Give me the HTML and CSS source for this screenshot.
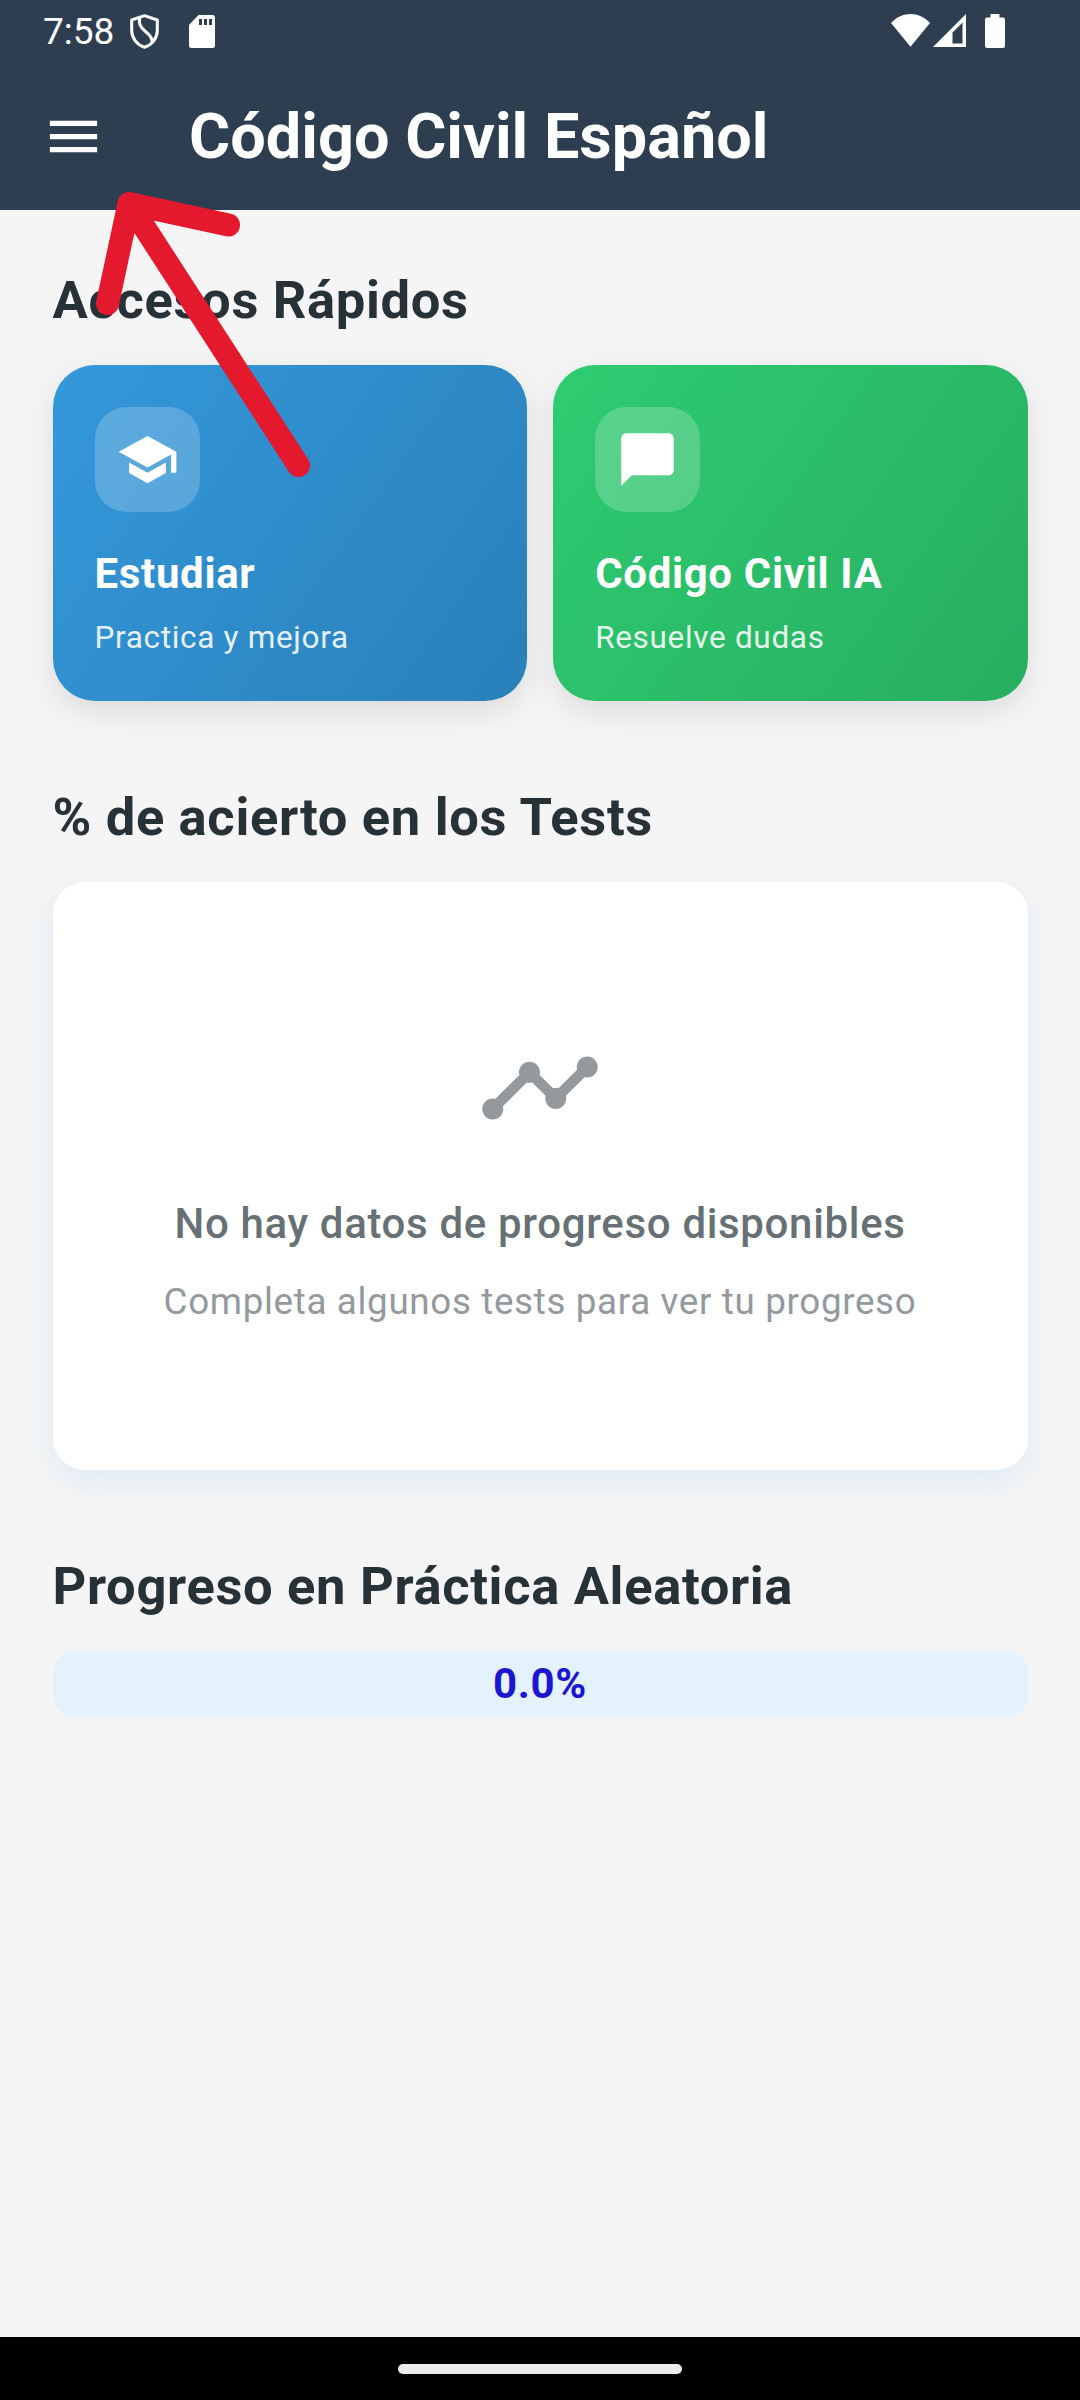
FILE: index.html
```html
<!DOCTYPE html>
<html lang="es">
<head>
<meta charset="utf-8">
<title>Código Civil Español</title>
<link rel="stylesheet" href="styles.css">
</head>
<body>
<div class="screen">
  <header class="header">
    <div class="status">
      <span class="time">7:58</span>
      <svg class="shield" width="29" height="35" viewBox="0 0 29 35" fill="none" stroke="#fff" stroke-width="3"><path d="M14.5 1.7 27.3 6v10.500C27.300 24 22 31 14.500 33.300 7 31 1.700 24 1.700 16.500V6Z" stroke-linejoin="round"/><path d="M10 3.500C7.500 10 11 14 15.500 17.500c5 4 7.500 7.500 6.500 12"/></svg>
      <svg class="sd" width="26" height="33" viewBox="0 0 26 33"><path fill="#fff" fill-rule="evenodd" d="M9.500 0H23.500A2.500 2.500 0 0 1 26 2.500V30.500A2.500 2.500 0 0 1 23.500 33H2.500A2.500 2.500 0 0 1 0 30.500V10ZM10 4v6h3V4ZM15 4v6h3V4ZM20 4v6h3V4Z"/></svg>
      <svg class="wifi" width="39" height="33" viewBox="0 0 39 33"><path fill="#fff" d="M0 9C11-3 28-3 39 9L19.500 32.700Z"/></svg>
      <svg class="signal" width="33" height="33" viewBox="0 0 33 33"><path fill="#fff" fill-rule="evenodd" d="M33 0V33H0ZM29.500 8.500 19.500 18.500V29.500H29.500Z"/></svg>
      <svg class="battery" width="20" height="34" viewBox="0 0 20 34"><path fill="#fff" d="M5.500 0h9v3.500H18a2 2 0 0 1 2 2V32a2 2 0 0 1-2 2H2a2 2 0 0 1-2-2V5.500a2 2 0 0 1 2-2h3.500Z"/></svg>
    </div>
    <div class="appbar">
      <svg width="63" height="63" viewBox="0 0 24 24" fill="#fff"><path d="M3 18h18v-2H3v2zm0-5h18v-2H3v2zm0-7v2h18V6H3z"/></svg>
      <h1 class="title">Código Civil Español</h1>
    </div>
  </header>
  <main class="content">
    <h2 class="heading">Accesos Rápidos</h2>
    <div class="cards">
      <section class="card blue">
        <div class="badge"><svg width="63" height="63" viewBox="0 0 24 24" fill="#fff"><path d="M5 13.180v4L12 21l7-3.820v-4L12 17l-7-3.820zM12 3 1 9l11 6 9-4.910V17h2V9L12 3z"/></svg></div>
        <h3 class="card-title">Estudiar</h3>
        <p class="card-text">Practica y mejora</p>
      </section>
      <section class="card green">
        <div class="badge"><svg width="63" height="63" viewBox="0 0 24 24" fill="#fff"><path d="M20 2H4c-1.100 0-2 .9-2 2v18l4-4h14c1.100 0 2-.9 2-2V4c0-1.100-.9-2-2-2z"/></svg></div>
        <h3 class="card-title">Código Civil IA</h3>
        <p class="card-text">Resuelve dudas</p>
      </section>
    </div>
    <h2 class="heading">% de acierto en los Tests</h2>
    <section class="empty">
      <svg width="126" height="126" viewBox="0 0 24 24" fill="#93999d"><path d="M23 8c0 1.100-.9 2-2 2-.18 0-.35-.02-.51-.07l-3.560 3.550c.05.16.07.34.07.52 0 1.100-.9 2-2 2s-2-.9-2-2c0-.18.02-.36.07-.52l-2.550-2.550c-.16.05-.34.07-.52.07s-.36-.02-.52-.07l-4.550 4.560c.05.16.07.33.07.51 0 1.100-.9 2-2 2s-2-.9-2-2 .9-2 2-2c.18 0 .35.02.51.07l4.560-4.550C8.020 9.360 8 9.180 8 9c0-1.100.9-2 2-2s2 .9 2 2c0 .18-.02.36-.07.52l2.550 2.550c.16-.05.34-.07.52-.07s.36.02.52.07l3.550-3.560C19.020 8.350 19 8.180 19 8c0-1.100.9-2 2-2s2 .9 2 2z"/></svg>
      <h3 class="empty-title">No hay datos de progreso disponibles</h3>
      <p class="empty-text">Completa algunos tests para ver tu progreso</p>
    </section>
    <h2 class="heading">Progreso en Práctica Aleatoria</h2>
    <div class="progress">0.0%</div>
  </main>
  <footer class="navbar"><div class="pill"></div></footer>
  <svg class="arrow" width="240" height="310" viewBox="85 180 240 310" fill="none" stroke="#e4192d" stroke-width="23" stroke-linecap="round" stroke-linejoin="round"><path d="M298.500 465.500 129 203.500M228.500 225 129 203.500 107.500 303.500"/></svg>
</div>
</body>
</html>
```
FILE: styles.css
```css
* { box-sizing: border-box; margin: 0; }
body { font-family: Roboto, "Liberation Sans", sans-serif; background: #f5f5f5; }
svg { display: block; flex: none; }
.screen { position: relative; display: flex; flex-direction: column; width: 1080px; height: 2400px; overflow: hidden; }
.header { height: 210px; background: #2d3e50; color: #fff; }
.status { display: flex; align-items: flex-start; height: 63px; padding: 14px 75px 0 43px; }
.time { width: 87px; font-size: 37px; line-height: 35px; }
.sd { margin: 1px 0 0 30px; }
.wifi { margin-left: auto; }
.signal { margin-left: 3px; }
.battery { margin-left: 19px; }
.appbar { display: flex; align-items: center; height: 147px; padding-left: 42px; gap: 84px; }
.title { font-size: 63px; line-height: 74px; font-weight: 700; white-space: nowrap; }
.content { flex: 1; padding: 59px 52.5px 0; }
.heading { font-size: 52.5px; line-height: 62px; font-weight: 700; letter-spacing: .66px; color: #263238; margin-bottom: 34px; white-space: nowrap; }
.cards { display: grid; grid-template-columns: 1fr 1fr; gap: 26.25px; margin-bottom: 85px; }
.card { height: 336px; padding: 42px; border-radius: 42px; color: #fff; box-shadow: 0 10.500px 31px rgba(0, 0, 0, .1); }
.blue { background: linear-gradient(125deg, #3498db, #2980b9); }
.green { background: linear-gradient(125deg, #2ecc71, #27ae60); }
.badge { display: flex; align-items: center; justify-content: center; width: 105px; height: 105px; border-radius: 31.5px; background: rgba(255, 255, 255, .2); }
.card-title { margin-top: 37px; font-size: 42px; line-height: 50px; font-weight: 700; letter-spacing: .66px; }
.card-text { margin-top: 20px; font-size: 31.5px; line-height: 38px; letter-spacing: .68px; color: rgba(255, 255, 255, .9); }
.empty { display: flex; flex-direction: column; align-items: center; height: 588px; padding-top: 143px; margin-bottom: 85px; border-radius: 31.5px; background: #fff; box-shadow: 0 10.500px 31px rgba(33, 150, 243, .1); }
.empty-title { margin-top: 48px; font-size: 42px; line-height: 50px; font-weight: 500; letter-spacing: .66px; color: #677074; }
.empty-text { margin-top: 31px; font-size: 36.750px; line-height: 44px; letter-spacing: .66px; color: #93999d; }
.progress { display: flex; align-items: center; justify-content: center; height: 66px; padding-bottom: 2px; border-radius: 21px; background: #e3f2fd; color: #1c16d2; font-size: 42px; font-weight: 700; letter-spacing: .66px; }
.navbar { display: flex; align-items: center; justify-content: center; height: 63px; background: #000; }
.pill { width: 284px; height: 10px; border-radius: 5px; background: #ebebeb; }
.arrow { position: absolute; left: 85px; top: 180px; }
```
